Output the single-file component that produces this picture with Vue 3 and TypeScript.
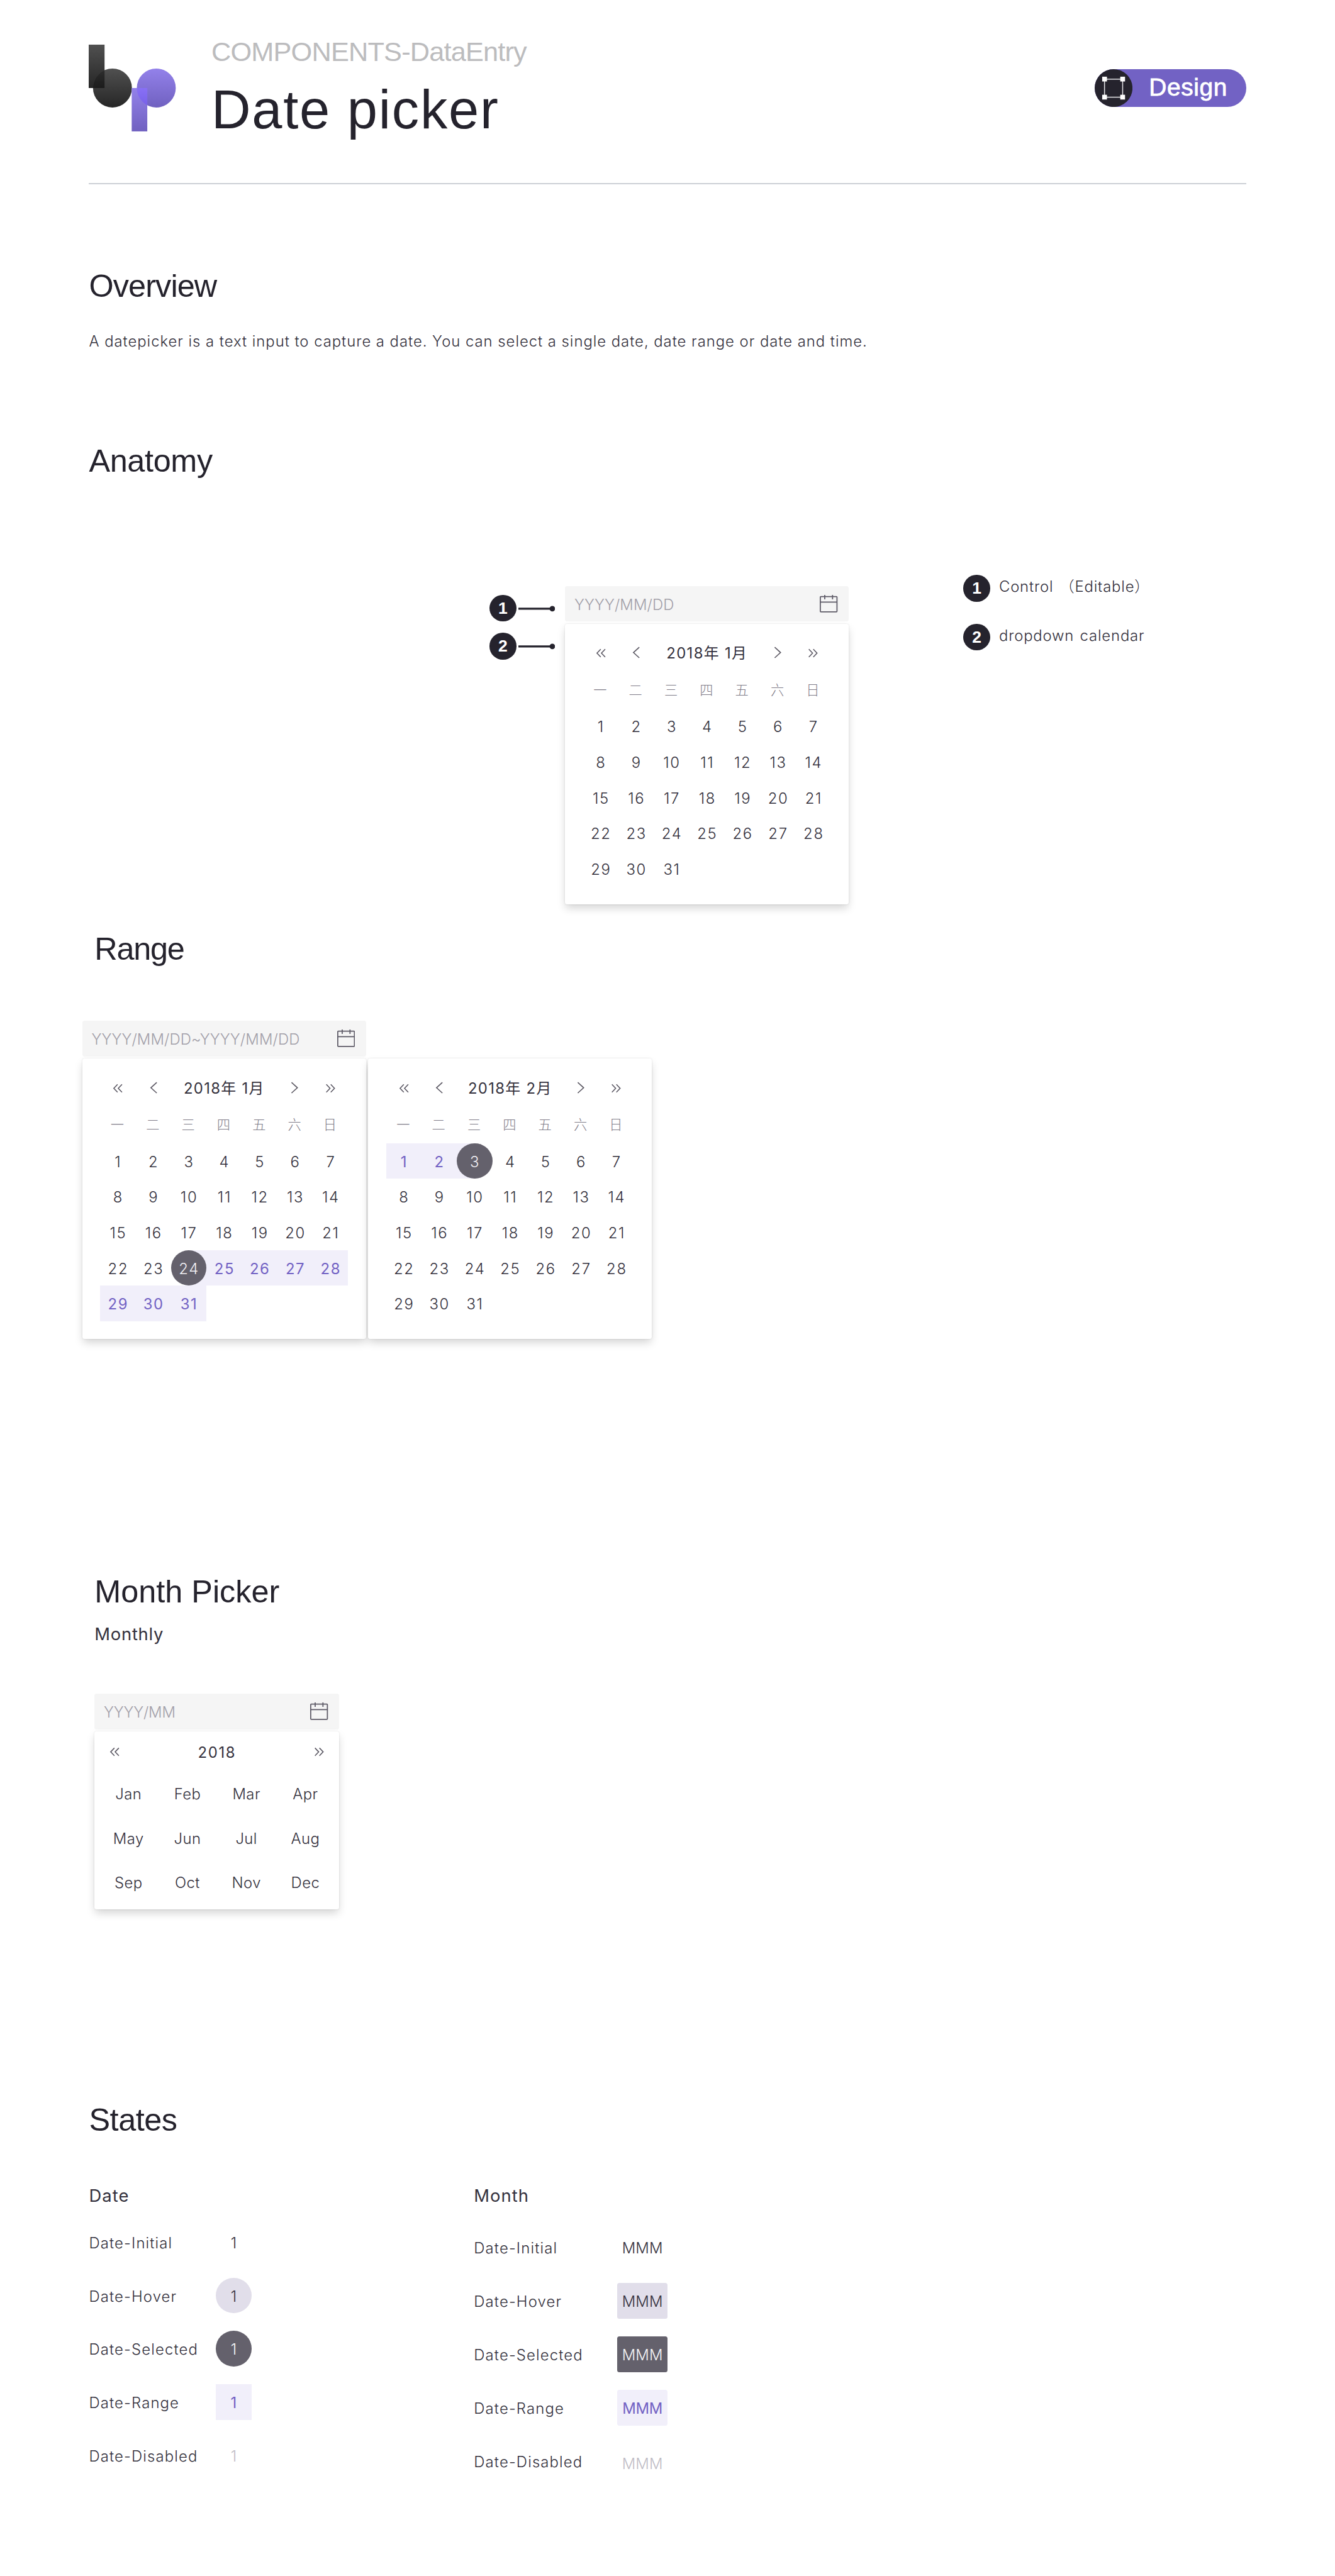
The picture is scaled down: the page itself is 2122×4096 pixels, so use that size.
<script setup lang="ts">
interface CalendarMonth {
  title: string
  selected?: number
  rangeFrom?: number
  rangeTo?: number
}

const weekdays: string[] = ['一', '二', '三', '四', '五', '六', '日']
const days: number[] = Array.from({ length: 31 }, (_, i) => i + 1)
const months: string[] = ['Jan', 'Feb', 'Mar', 'Apr', 'May', 'Jun', 'Jul', 'Aug', 'Sep', 'Oct', 'Nov', 'Dec']
const states: string[] = ['Initial', 'Hover', 'Selected', 'Range', 'Disabled']

const anatomyMonth: CalendarMonth = { title: '2018年 1月' }
const rangeMonths: CalendarMonth[] = [
  { title: '2018年 1月', selected: 24, rangeFrom: 25, rangeTo: 31 },
  { title: '2018年 2月', selected: 3, rangeFrom: 1, rangeTo: 2 },
]

const groups: { name: string; heading: string; months: CalendarMonth[]; placeholder: string }[] = [
  { name: 'anatomy', heading: 'Anatomy', months: [anatomyMonth], placeholder: 'YYYY/MM/DD' },
  { name: 'range', heading: 'Range', months: rangeMonths, placeholder: 'YYYY/MM/DD~YYYY/MM/DD' },
]

function dayClass(month: CalendarMonth, day: number): Record<string, boolean> {
  const from = month.rangeFrom ?? 0
  const to = month.rangeTo ?? -1
  return {
    'in-range': day >= from && day <= to,
    selected: day === month.selected,
    start: day === month.selected && day < from,
    end: day === month.selected && day > to,
  }
}
</script>

<template>
  <div class="page">
    <header class="header">
      <svg class="logo" width="157" height="156" viewBox="0 0 157 156">
        <defs>
          <linearGradient id="ink" x1="0" y1="0" x2="0" y2="1">
            <stop offset="0" stop-color="#505050" />
            <stop offset="1" stop-color="#262626" />
          </linearGradient>
          <linearGradient id="violet" x1="0" y1="0" x2="0" y2="1">
            <stop offset="0" stop-color="#9381ea" />
            <stop offset="1" stop-color="#7061c0" />
          </linearGradient>
          <linearGradient id="inkOver" x1="0" y1="0" x2="0" y2="1">
            <stop offset="0" stop-color="#2e2e2e" />
            <stop offset="1" stop-color="#1b1b1b" />
          </linearGradient>
          <linearGradient id="violetOver" x1="0" y1="0" x2="0" y2="1">
            <stop offset="0" stop-color="#8870f5" />
            <stop offset="1" stop-color="#7861e8" />
          </linearGradient>
          <clipPath id="inkClip"><circle cx="42.7" cy="78" r="35" /></clipPath>
          <clipPath id="violetClip"><circle cx="121.5" cy="78" r="35" /></clipPath>
        </defs>
        <rect width="28.5" height="78" fill="url(#ink)" />
        <circle cx="42.7" cy="78" r="35" fill="url(#ink)" />
        <rect y="43" width="28.5" height="35" fill="url(#inkOver)" clip-path="url(#inkClip)" />
        <circle cx="121.5" cy="78" r="35" fill="url(#violet)" />
        <rect x="77.3" y="78" width="28" height="78" fill="url(#violet)" />
        <rect x="77.3" y="78" width="28" height="32" fill="url(#violetOver)" clip-path="url(#violetClip)" />
      </svg>
      <div class="titles">
        <div class="crumb">COMPONENTS-DataEntry</div>
        <h1>Date picker</h1>
      </div>
      <div class="badge">
        <svg width="68" height="68" viewBox="0 0 68 68">
          <circle cx="34" cy="34" r="34" fill="#25232d" />
          <rect x="17.7" y="18" width="32.6" height="32.4" fill="none" stroke="#e4e4e6" stroke-width="1.7" />
          <g fill="#fff">
            <rect x="13.5" y="13.5" width="8.6" height="8.6" />
            <rect x="46" y="13.5" width="8.6" height="8.6" />
            <rect x="13.5" y="46" width="8.6" height="8.6" />
            <rect x="46" y="46" width="8.6" height="8.6" />
          </g>
        </svg>
        <span>Design</span>
      </div>
    </header>

    <section class="overview">
      <h2>Overview</h2>
      <p>A datepicker is a text input to capture a date. You can select a single date, date range or date and time.</p>
    </section>

    <section v-for="group in groups" :key="group.name" :class="group.name">
      <h2>{{ group.heading }}</h2>
      <div class="stage">
        <div v-if="group.name === 'anatomy'" class="callouts">
          <div v-for="n in 2" :key="n" class="callout">
            <span class="bullet">{{ n }}</span>
            <svg width="66" height="12" viewBox="0 0 66 12">
              <path d="M0 6.6H60" stroke="#25232d" stroke-width="3.6" />
              <circle cx="61" cy="6.6" r="5" fill="#25232d" />
            </svg>
          </div>
        </div>
        <div class="picker">
          <div class="control">
            <span>{{ group.placeholder }}</span>
            <svg class="cal" width="32" height="32" viewBox="0 0 32 32">
              <rect x="1" y="3" width="30" height="27.4" rx="1" />
              <path d="M1 13H31M9 0V8M23 0V8" />
            </svg>
          </div>
          <div class="panels">
            <div v-for="month in group.months" :key="month.title" class="panel">
              <div class="nav">
                <svg width="64" height="24" viewBox="0 0 64 24"><path d="M31.5 6L24.8 13L31.5 20M39.5 6L32.8 13L39.5 20" /></svg>
                <svg width="64" height="24" viewBox="0 0 64 24"><path d="M37.5 2.5L27 12L37.5 21.5" /></svg>
                <span class="caption">{{ month.title }}</span>
                <svg width="64" height="24" viewBox="0 0 64 24"><path d="M26.5 2.5L37 12L26.5 21.5" /></svg>
                <svg width="64" height="24" viewBox="0 0 64 24"><path d="M24.5 6L31.2 13L24.5 20M32.5 6L39.2 13L32.5 20" /></svg>
              </div>
              <div class="grid weekdays">
                <span v-for="w in weekdays" :key="w">{{ w }}</span>
              </div>
              <div class="grid">
                <span v-for="d in days" :key="d" class="day" :class="dayClass(month, d)"><b>{{ d }}</b></span>
              </div>
            </div>
          </div>
        </div>
        <div v-if="group.name === 'anatomy'" class="legend">
          <div class="entry"><span class="bullet">1</span><span class="note">Control （Editable）</span></div>
          <div class="entry"><span class="bullet">2</span><span class="note">dropdown calendar</span></div>
        </div>
      </div>
    </section>

    <section class="monthly">
      <h2>Month Picker</h2>
      <h3>Monthly</h3>
      <div class="picker">
        <div class="control short">
          <span>YYYY/MM</span>
          <svg class="cal" width="32" height="32" viewBox="0 0 32 32">
            <rect x="1" y="3" width="30" height="27.4" rx="1" />
            <path d="M1 13H31M9 0V8M23 0V8" />
          </svg>
        </div>
        <div class="panel">
          <div class="nav">
            <svg width="64" height="24" viewBox="0 0 64 24"><path d="M31.5 5L24.8 12L31.5 19M39.5 5L32.8 12L39.5 19" /></svg>
            <span class="caption">2018</span>
            <svg width="64" height="24" viewBox="0 0 64 24"><path d="M24.5 5L31.2 12L24.5 19M32.5 5L39.2 12L32.5 19" /></svg>
          </div>
          <div class="months">
            <span v-for="m in months" :key="m">{{ m }}</span>
          </div>
        </div>
      </div>
    </section>

    <section class="states">
      <h2>States</h2>
      <div class="columns">
        <div class="column date">
          <h3>Date</h3>
          <div v-for="s in states" :key="s" class="state">
            <span class="label">Date-{{ s }}</span>
            <span class="sample" :class="'is-' + s.toLowerCase()">1</span>
          </div>
        </div>
        <div class="column month">
          <h3>Month</h3>
          <div v-for="s in states" :key="s" class="state">
            <span class="label">Date-{{ s }}</span>
            <span class="sample" :class="'is-' + s.toLowerCase()">MMM</span>
          </div>
        </div>
      </div>
    </section>
  </div>
</template>

<style>
body {
  margin: 0;
  background: #fff;
}
</style>

<style scoped>
.page {
  zoom: 0.88417;
  width: 2400px;
  height: 4632px;
  overflow: hidden;
  box-sizing: border-box;
  background: #fff;
  color: #34313d;
  font: 300 27px/40px Inter, 'Noto Sans CJK SC', sans-serif;
}
.page * {
  box-sizing: border-box;
}
h1, h2, h3, p {
  margin: 0;
}
h1, h2, h3 {
  font-weight: 400;
}
h1, h2, .crumb, .badge, .bullet {
  font-family: 'Liberation Sans', Arial, sans-serif;
}
h2 {
  color: #25232d;
  font-size: 57px;
  line-height: 60px;
  white-space: nowrap;
}
h3 {
  font-size: 31px;
  line-height: 40px;
}

/* Header */
.header {
  display: flex;
  align-items: flex-start;
  height: 331px;
  margin: 0 160px;
  border-bottom: 2.3px solid #cdd0d6;
}
.logo {
  margin-top: 80px;
}
.titles {
  flex: 1;
  margin: 63px 0 0 63px;
  white-space: nowrap;
}
.crumb {
  color: #bcbcbe;
  font-size: 49px;
  font-weight: 400;
  line-height: 60px;
  letter-spacing: -0.93px;
}
h1 {
  margin: 14px 0 0 0;
  color: #25232d;
  font-size: 98px;
  line-height: 120px;
  letter-spacing: 2px;
}
.badge {
  display: flex;
  align-items: center;
  width: 272px;
  height: 68px;
  margin-top: 124px;
  border-radius: 34px;
  background: #7262c4;
  color: #fff;
  font-size: 44px;
  line-height: 68px;
  letter-spacing: 0.7px;
}
.badge span {
  margin: -2px 0 0 29.5px;
  -webkit-text-stroke: 0.9px #fff;
}

/* Overview */
.overview {
  height: 467px;
  padding: 153px 160px 0;
}
.overview h2 {
  letter-spacing: -1px;
}
.overview p {
  margin-top: 50px;
  letter-spacing: 1.1px;
  white-space: nowrap;
}

/* Anatomy */
.anatomy {
  height: 878px;
}
.anatomy h2 {
  margin-left: 160px;
  letter-spacing: -0.4px;
}
.anatomy .stage {
  display: flex;
  margin-top: 176px;
  padding-left: 880px;
}
.callouts {
  width: 136px;
  padding-top: 36px;
}
.callout {
  display: flex;
  align-items: center;
  gap: 4px;
  height: 48px;
  margin-bottom: 20px;
}
.anatomy .picker {
  margin-top: 20px;
}
.bullet {
  flex: none;
  width: 48px;
  height: 48px;
  border-radius: 50%;
  background: #25232d;
  color: #fff;
  font-size: 30px;
  font-weight: 700;
  line-height: 48px;
  text-align: center;
}
.legend {
  margin-left: 206px;
}
.entry {
  display: flex;
  gap: 16px;
  height: 48px;
  margin-bottom: 40px;
}
.note {
  letter-spacing: 0.95px;
  word-spacing: 2px;
  line-height: 42px;
  white-space: pre;
}

/* Range */
.range {
  height: 1156px;
}
.range h2 {
  margin-left: 170px;
  letter-spacing: -1.4px;
}
.range .stage {
  margin-top: 100px;
  padding-left: 148px;
}

/* Picker */
.control {
  display: flex;
  align-items: center;
  justify-content: space-between;
  width: 510px;
  height: 64px;
  padding: 0 20px 0 16.5px;
  border-radius: 4px;
  background: #f5f5f5;
  color: #a29fa9;
  letter-spacing: 0.13px;
}
.control span {
  padding-top: 3px;
}
.cal {
  fill: none;
  stroke: #5e5b67;
  stroke-width: 2;
}
.panels {
  display: flex;
  gap: 4px;
  margin-top: 4px;
}
.panel {
  width: 510px;
  height: 504px;
  padding: 24px 32px 0;
  border-radius: 4px;
  background: #fff;
  box-shadow: 0 8px 16px -2px rgba(0, 0, 0, 0.17), 0 0 3px rgba(0, 0, 0, 0.12);
}
.nav {
  display: flex;
  align-items: center;
  height: 56px;
}
.nav svg {
  flex: none;
  fill: none;
  stroke: #5b5863;
  stroke-width: 1.8;
}
.caption {
  flex: 1;
  padding-top: 2px;
  font-weight: 400;
  text-align: center;
  letter-spacing: 1.5px;
  white-space: nowrap;
}
.grid {
  display: grid;
  grid-template-columns: repeat(7, 1fr);
  grid-auto-rows: 64px;
}
.weekdays {
  height: 72px;
  color: #7f7c88;
  font-size: 24px;
  line-height: 79px;
  text-align: center;
}
.weekdays span {
  margin-left: -2px;
}
.day {
  display: block;
  line-height: 67px;
  text-align: center;
}
.day b {
  display: block;
  font-weight: 300;
  letter-spacing: 1.9px;
  text-indent: 1.4px;
}
.in-range {
  background: #f1effa;
  color: #7262c4;
}
.in-range b {
  font-weight: 400;
}
.start {
  background: linear-gradient(90deg, transparent 50%, #f1effa 50%);
}
.end {
  background: linear-gradient(90deg, #f1effa 50%, transparent 50%);
}
.selected b {
  height: 64px;
  border-radius: 50%;
  background: #64616c;
  color: #f0eff3;
}

/* Month picker */
.monthly {
  height: 950px;
  padding-left: 170px;
}
.monthly h3 {
  margin-top: 27px;
  letter-spacing: 0.85px;
}
.monthly .picker {
  margin-top: 87px;
}
.control.short {
  width: 440px;
  letter-spacing: -0.15px;
}
.monthly .panel {
  width: 440px;
  height: 320px;
  margin-top: 4px;
  padding: 0 8px;
}
.monthly .nav {
  height: 72px;
  padding-top: 1px;
}
.monthly .nav svg:first-child {
  margin-left: -4px;
}
.monthly .nav svg:last-child {
  margin-right: -4px;
}
.monthly .caption {
  letter-spacing: 1.8px;
}
.months {
  display: grid;
  grid-template-columns: repeat(4, 106px);
  grid-auto-rows: 80px;
  line-height: 82px;
  text-align: center;
  letter-spacing: 0.5px;
}

/* States */
.columns {
  display: flex;
  margin: 87px 0 0 160px;
}
.states h2 {
  margin-left: 160px;
  letter-spacing: -0.5px;
}
.column {
  width: 692px;
}
.column h3 {
  margin-bottom: 31px;
  letter-spacing: 1.2px;
}
.column.month h3 {
  margin-bottom: 41px;
}
.state {
  display: flex;
  height: 64px;
  margin-bottom: 32px;
  line-height: 67px;
}
.label {
  width: 228px;
  letter-spacing: 1.3px;
  white-space: nowrap;
}
.sample {
  width: 64px;
  height: 64px;
  text-align: center;
}
.is-hover {
  background: #e1deea;
}
.is-selected {
  background: #64616c;
  color: #f5f5f7;
}
.is-range {
  background: #f1effa;
  color: #7262c4;
  font-weight: 400;
}
.is-disabled {
  color: #bfbdc6;
}
.date .is-hover,
.date .is-selected {
  border-radius: 50%;
}
.month .label {
  width: 258px;
}
.month .sample {
  width: 90px;
  border-radius: 4px;
  letter-spacing: 0.2px;
}
.month .is-range {
  letter-spacing: -0.3px;
}
.month .is-disabled {
  padding-top: 4px;
}
</style>
